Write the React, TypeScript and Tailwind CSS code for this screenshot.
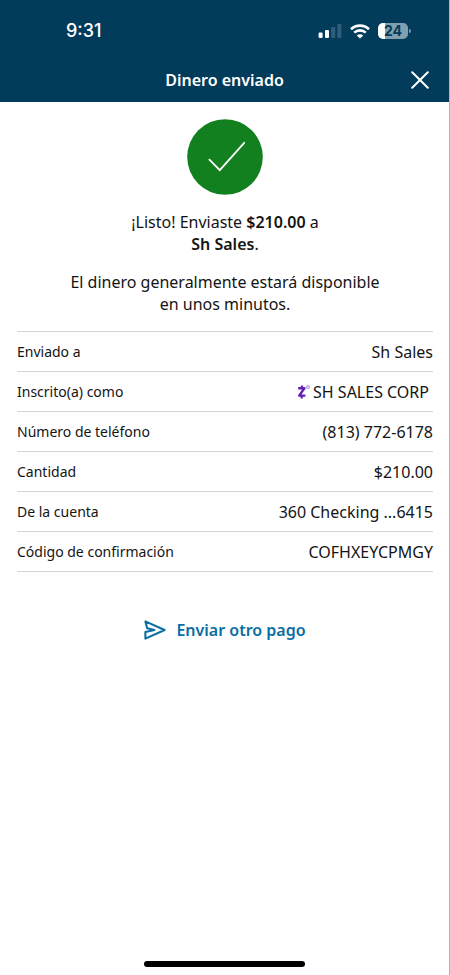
import type { ReactNode } from "react";

type Detail = { label: string; value: ReactNode };

function ZelleMark() {
  return (
    <svg width="14" height="16" viewBox="0 0 14 16" aria-label="Zelle" role="img" className="shrink-0">
      <path d="M1.2 4.3H7.4L2.2 11.6H8.4" fill="none" stroke="#6420b4" strokeWidth="2.4" strokeLinejoin="round" />
      <path d="M5 1.4V4.4M4.7 11.6V14.4" stroke="#6420b4" strokeWidth="2.2" />
      <circle cx="11" cy="3" r="1.7" fill="#d9c6ee" stroke="#b99ae0" strokeWidth="0.8" />
    </svg>
  );
}

const details: Detail[] = [
  { label: "Enviado a", value: "Sh Sales" },
  {
    label: "Inscrito(a) como",
    value: (
      <span className="flex items-center gap-0.5 pr-1">
        <ZelleMark />
        SH SALES CORP
      </span>
    ),
  },
  { label: "Número de teléfono", value: "(813) 772-6178" },
  { label: "Cantidad", value: "$210.00" },
  { label: "De la cuenta", value: "360 Checking ...6415" },
  { label: "Código de confirmación", value: "COFHXEYCPMGY" },
];

function StatusBar() {
  return (
    <div className="flex h-[62px] items-center justify-between pr-[38px] pl-[66px] text-white">
      <span className="font-['Inter',sans-serif] text-lg font-medium">9:31</span>
      <div className="flex items-center gap-2">
        <svg width="24" height="16" viewBox="0 0 24 16" aria-hidden="true">
          <rect x="0.6" y="9.6" width="4" height="5.4" rx="1" fill="#fff" />
          <rect x="7" y="7" width="4" height="8" rx="1" fill="#fff" />
          <rect x="13.2" y="4" width="4" height="11" rx="1" fill="#315f7b" />
          <rect x="19.4" y="1" width="4" height="14" rx="1" fill="#315f7b" />
        </svg>
        <svg width="20" height="15" viewBox="0 0 20 15" fill="none" stroke="#fff" strokeWidth="2.6" aria-hidden="true">
          <path d="M1 5.2C6 .4 14 .4 19 5.2" />
          <path d="M4.2 8.6C7.4 5.6 12.6 5.6 15.8 8.6" />
          <path d="M10 14.6 6.8 11.5C8.6 9.9 11.4 9.9 13.2 11.5Z" fill="#fff" stroke="none" />
        </svg>
        <div className="flex items-center gap-px" aria-label="24%">
          <div className="flex h-4 w-[30px] items-center justify-center rounded-[5px] bg-linear-to-r from-white from-22% to-[#829fb0] to-22% font-['Inter',sans-serif] text-sm leading-4 font-bold text-[#033c5a]">
            24
          </div>
          <div className="h-1 w-0.5 rounded-r-full bg-[#829fb0]" />
        </div>
      </div>
    </div>
  );
}

export default function App() {
  return (
    <div className="flex min-h-screen flex-col border-r border-[#b5b5b5] bg-white font-['Noto_Sans',sans-serif] text-[#141414]">
      <header className="bg-[#033c5a] text-white">
        <StatusBar />
        <div className="grid h-10 grid-cols-[1fr_auto_1fr] items-center px-5 pb-1">
          <h1 className="col-start-2 text-base font-semibold">Dinero enviado</h1>
          <button type="button" aria-label="Cerrar" className="justify-self-end">
            <svg width="18" height="18" viewBox="0 0 18 18" stroke="#fff" strokeWidth="2" strokeLinecap="round">
              <path d="M1.2 1.2 16.8 16.8M16.8 1.2 1.2 16.8" />
            </svg>
          </button>
        </div>
      </header>

      <main className="flex grow flex-col pt-[17px] pr-4 pl-[17px]">
        <svg width="76" height="76" viewBox="0 0 76 76" className="self-center" aria-hidden="true">
          <circle cx="38" cy="38" r="37.8" fill="#138020" />
          <path d="M22.4 40.6 32.8 51.2 57.2 23.8" fill="none" stroke="#fff" strokeWidth="1.8" strokeLinecap="round" />
        </svg>

        <div className="mt-4 space-y-4 text-center text-base leading-[22px]">
          <p>
            ¡Listo! Enviaste <b className="font-semibold">$210.00</b> a<br />
            <b className="font-semibold">Sh Sales</b>.
          </p>
          <p>
            El dinero generalmente estará disponible
            <br />
            en unos minutos.
          </p>
        </div>

        <dl className="mt-4 border-t border-[#d4d4d4]">
          {details.map((d) => (
            <div key={d.label} className="flex h-10 items-center justify-between border-b border-[#d4d4d4]">
              <dt className="text-sm">{d.label}</dt>
              <dd className="text-base">{d.value}</dd>
            </div>
          ))}
        </dl>

        <button type="button" className="mt-[46px] flex items-center gap-2.5 self-center text-base font-semibold text-[#0b6ea3]">
          <svg width="22" height="20" viewBox="0 0 22 20" fill="none" stroke="currentColor" strokeWidth="2.1" strokeLinejoin="round" strokeLinecap="round" aria-hidden="true">
            <path d="M1.4 1.4 20.6 10 1.4 18.6V12L10.4 10 3.2 8.2Z" />
          </svg>
          Enviar otro pago
        </button>
      </main>

      <footer className="flex justify-center pb-2">
        <div className="h-[6px] w-[36%] rounded-full bg-black" />
      </footer>
    </div>
  );
}
